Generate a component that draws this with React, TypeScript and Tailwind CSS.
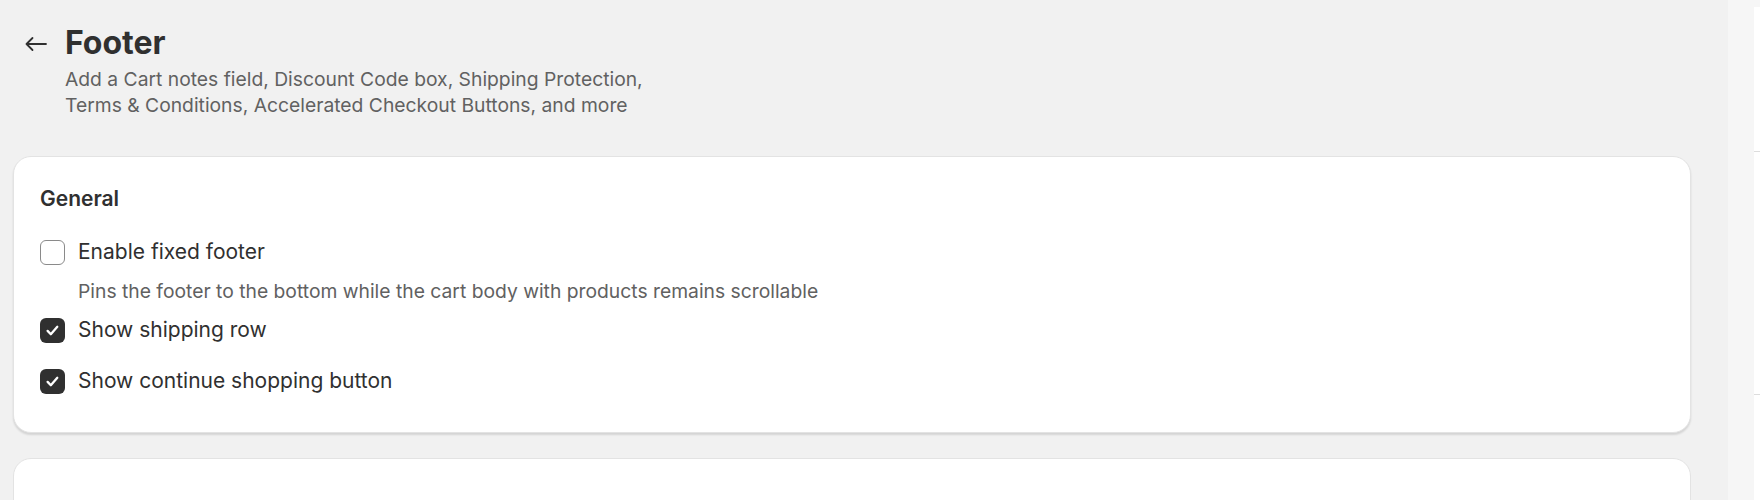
import { useState } from 'react';

/**
 * Footer settings page
 *
 * Header with back arrow, title and short description,
 * then a "General" card holding the footer checkboxes.
 */

interface CheckboxRowProps {
  label: string;
  checked: boolean;
  onToggle: () => void;
}

function CheckboxRow({ label, checked, onToggle }: CheckboxRowProps) {
  return (
    <label className="flex h-[28px] cursor-pointer items-center gap-[13px]" onClick={onToggle}>
      {checked ? (
        <span className="flex h-[25px] w-[25px] items-center justify-center rounded-[6px] bg-[#303030]">
          <svg width="25" height="25" viewBox="0 0 24 24" fill="none">
            <path d="M7.3 12.4l3.1 3.2 6.2-7.2" stroke="#fff" strokeWidth="2.2" strokeLinecap="round" strokeLinejoin="round" />
          </svg>
        </span>
      ) : (
        <span className="h-[25px] w-[25px] rounded-[6px] border border-[#8a8a8a] bg-white" />
      )}
      <span className="text-[21px] leading-[28px] text-[#303030]">{label}</span>
    </label>
  );
}

export default function App() {
  const [fixedFooter, setFixedFooter] = useState(false);
  const [shippingRow, setShippingRow] = useState(true);
  const [continueButton, setContinueButton] = useState(true);

  return (
    <div className="flex h-[500px] w-full overflow-hidden font-['Inter','Noto_Sans',sans-serif]">
      {/* Main settings column */}
      <div className="w-[1728px] shrink-0 bg-[#f1f1f1] pl-[13px] pr-[37px]">
        <div className="flex gap-[18px] pl-[12px] pt-[23px]">
          <button type="button" className="mt-[10px] h-[22px] w-[22px] shrink-0 text-[#303030]">
            <svg width="22" height="22" viewBox="0 0 22 22" fill="none">
              <path d="M21 11H1.5M7.5 5 1.5 11l6 6" stroke="currentColor" strokeWidth="1.8" strokeLinecap="round" strokeLinejoin="round" />
            </svg>
          </button>
          <div>
            <h1 className="text-[32px] font-bold leading-[40px] text-[#303030]">Footer</h1>
            <p className="mt-[4px] text-[19.3px] leading-[25.5px] text-[#616161]">
              Add a Cart notes field, Discount Code box, Shipping Protection,
              <br />
              Terms &amp; Conditions, Accelerated Checkout Buttons, and more
            </p>
          </div>
        </div>

        <div className="mt-[38px] rounded-[18px] border border-[#e3e3e3] bg-white px-[26px] pb-[37px] pt-[28px] shadow-[0_2px_2px_rgba(0,0,0,0.12)]">
          <h2 className="text-[21px] font-semibold leading-[28px] text-[#303030]">General</h2>
          <div className="mt-[25px] flex flex-col">
            <CheckboxRow label="Enable fixed footer" checked={fixedFooter} onToggle={() => setFixedFooter(!fixedFooter)} />
            <p className="mt-[13px] pl-[38px] text-[19.3px] leading-[24px] text-[#616161]">
              Pins the footer to the bottom while the cart body with products remains scrollable
            </p>
            <div className="mt-[13px]">
              <CheckboxRow label="Show shipping row" checked={shippingRow} onToggle={() => setShippingRow(!shippingRow)} />
            </div>
            <div className="mt-[23px]">
              <CheckboxRow
                label="Show continue shopping button"
                checked={continueButton}
                onToggle={() => setContinueButton(!continueButton)}
              />
            </div>
          </div>
        </div>

        <div className="mt-[25px] h-[120px] rounded-[18px] border border-[#e3e3e3] bg-white" />
      </div>

      {/* Scroll track */}
      <div className="w-[26px] shrink-0 bg-[#f6f6f6]" />

      {/* Preview panel edge */}
      <div className="flex-1 bg-[#f6f6f6] pt-[7px]">
        <div className="h-full bg-white">
          <div className="h-[145px] border-b border-[#dddddd]" />
          <div className="h-[243px] border-b border-[#dddddd]" />
        </div>
      </div>
    </div>
  );
}
